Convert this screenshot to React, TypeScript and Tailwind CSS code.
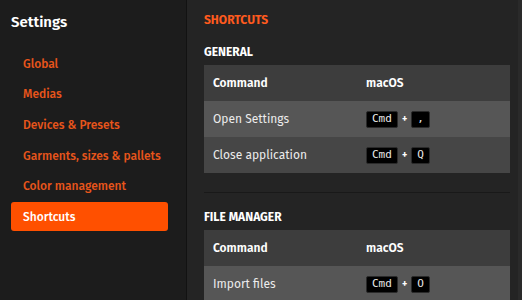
import React from "react";

const menu = [
  "Global",
  "Medias",
  "Devices & Presets",
  "Garments, sizes & pallets",
  "Color management",
  "Shortcuts",
];

type Row = { label: string; keys: string[] };

const sections: { title: string; rows: Row[] }[] = [
  {
    title: "GENERAL",
    rows: [
      { label: "Open Settings", keys: ["Cmd", ","] },
      { label: "Close application", keys: ["Cmd", "Q"] },
    ],
  },
  {
    title: "FILE MANAGER",
    rows: [{ label: "Import files", keys: ["Cmd", "O"] }],
  },
];

function Key({ k }: { k: string }) {
  return (
    <span className="inline-flex h-[17px] min-w-[15px] items-center justify-center rounded-[2px] border border-[#2a2a2a] bg-black px-[5px] font-['DejaVu_Sans_Mono',monospace] text-[11px] text-[#e8e8e8]">
      {k}
    </span>
  );
}

function Table({ rows }: { rows: Row[] }) {
  return (
    <div className="w-[306px] text-[12px]">
      <div className="flex h-[36px] items-center bg-[#3d3d3d] font-semibold text-white">
        <div className="w-[162px] pl-[9px]">Command</div>
        <div>macOS</div>
      </div>
      {rows.map((r, i) => (
        <div
          key={r.label}
          className={
            "flex h-[36px] items-center text-[#ececec] " +
            (i % 2 === 0 ? "bg-[#565656]" : "bg-[#464646]")
          }
        >
          <div className="w-[162px] pl-[9px]">{r.label}</div>
          <div className="flex items-center gap-[4px]">
            {r.keys.map((k, j) => (
              <React.Fragment key={j}>
                {j > 0 && <span className="text-[10px] font-bold text-white">+</span>}
                <Key k={k} />
              </React.Fragment>
            ))}
          </div>
        </div>
      ))}
    </div>
  );
}

export default function App() {
  return (
    <div className="flex h-[300px] w-[522px] overflow-hidden bg-[#242424] font-['Fira_Sans','Lato',sans-serif]">
      <aside className="w-[187px] shrink-0 border-r border-[#121212] bg-[#1c1c1c] pl-[11px] pr-[18px]">
        <h1 className="mt-[10px] text-[15px] font-semibold leading-[24px] text-white">Settings</h1>
        <nav className="mt-[15px] flex flex-col gap-[1.7px]">
          {menu.map((m) => (
            <div
              key={m}
              className={
                "flex h-[29px] items-center whitespace-nowrap rounded-[3px] px-[12px] text-[12px] font-medium " +
                (m === "Shortcuts"
                  ? "bg-[#ff5000] text-white"
                  : "text-[#e8551b]")
              }
            >
              {m}
            </div>
          ))}
        </nav>
      </aside>
      <main className="flex-1 pl-[17px] pt-[12px]">
        <h2 className="text-[12px] font-bold leading-[16px] text-[#ff5a1e]">SHORTCUTS</h2>
        <h3 className="mt-[16px] mb-[5px] text-[12px] font-bold leading-[16px] text-white">GENERAL</h3>
        <Table rows={sections[0].rows} />
        <div className="mt-[19px] w-[306px] border-t border-[#191919]" />
        <h3 className="mt-[16px] mb-[5px] text-[12px] font-bold leading-[16px] text-white">FILE MANAGER</h3>
        <Table rows={sections[1].rows} />
      </main>
      <div className="w-[4px] shrink-0 bg-[#2a2a2a]" />
    </div>
  );
}
